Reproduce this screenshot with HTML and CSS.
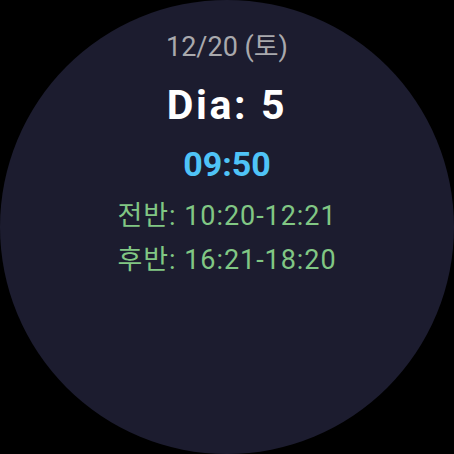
FILE: index.html
```html
<!DOCTYPE html>
<html>
<head>
<meta charset="utf-8">
<link rel="stylesheet" href="styles.css">
</head>
<body>
<div class="face">
  <div class="date">12/20 (토)</div>
  <div class="dia">Dia: 5</div>
  <div class="time">09:50</div>
  <div class="shift first">전반: 10:20-12:21</div>
  <div class="shift">후반: 16:21-18:20</div>
</div>
</body>
</html>
```
FILE: styles.css
```css
html, body {
  margin: 0;
  padding: 0;
  background: #000;
  width: 454px;
  height: 454px;
  overflow: hidden;
}
.face {
  width: 454px;
  height: 454px;
  border-radius: 50%;
  background: #1c1c2f;
  display: flex;
  flex-direction: column;
  align-items: center;
  box-sizing: border-box;
  padding-top: 29px;
  font-family: Roboto, "Noto Sans CJK KR", sans-serif;
}
.date {
  color: #a9a9ad;
  font-size: 27px;
  line-height: 36px;
}
.dia {
  color: #ffffff;
  font-weight: bold;
  font-size: 41px;
  line-height: 50px;
  letter-spacing: 2.6px;
  margin-top: 15px;
}
.time {
  color: #4fc3f7;
  font-weight: bold;
  font-size: 34px;
  line-height: 40px;
  margin-top: 14px;
}
.shift {
  color: #81c784;
  font-size: 27px;
  line-height: 44px;
  letter-spacing: 0.95px;
}
.shift.first {
  margin-top: 10px;
}
```
